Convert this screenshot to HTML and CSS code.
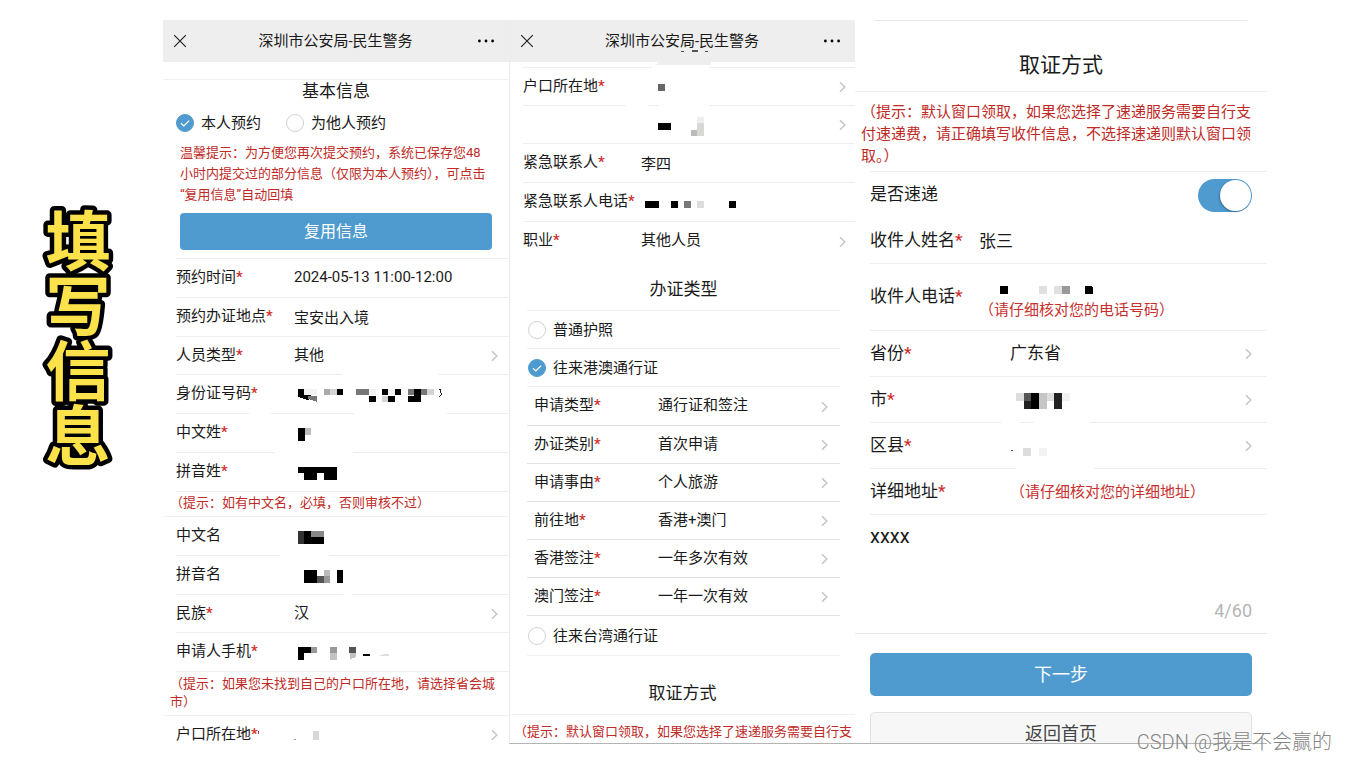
FILE: index.html
```html
<!DOCTYPE html>
<html lang="zh-CN">
<head>
<meta charset="utf-8">
<title>填写信息</title>
<link rel="stylesheet" href="styles.css">
</head>
<body>
<svg class="defs" aria-hidden="true">
  <symbol id="chevron" viewBox="0 0 7 12"><path d="M1 1.2 5.8 6 1 10.8" fill="none" stroke="#c4c4c4" stroke-width="1.5"/></symbol>
  <symbol id="close" viewBox="0 0 14 14"><path d="M1.2 1.2 12.8 12.8M12.8 1.2 1.2 12.8" fill="none" stroke="#222" stroke-width="1.2"/></symbol>
  <symbol id="more" viewBox="0 0 18 4"><circle cx="2.4" cy="2" r="1.4"/><circle cx="9" cy="2" r="1.4"/><circle cx="15.6" cy="2" r="1.4"/></symbol>
</svg>
<main class="board">
  <div class="side">
    <h1 class="side-title"><svg class="side-art" viewBox="0 0 120 280"><text x="60" y="8">填写信息</text></svg></h1>
  </div>

  <section class="panel">
    <header class="bar">
      <button class="icon-btn" aria-label="关闭"><svg class="close"><use href="#close"/></svg></button>
      <span class="bar-title">深圳市公安局-民生警务</span>
      <button class="icon-btn" aria-label="更多"><svg class="more"><use href="#more"/></svg></button>
    </header>
    <div class="spacer"></div>
    <h2 class="heading">基本信息</h2>
    <div class="who">
      <label class="option"><input class="radio" type="radio" name="who" checked>本人预约</label>
      <label class="option"><input class="radio" type="radio" name="who">为他人预约</label>
    </div>
    <p class="tip">温馨提示：为方便您再次提交预约，系统已保存您48<br>小时内提交过的部分信息（仅限为本人预约），可点击<br>“复用信息”自动回填</p>
    <button class="btn reuse">复用信息</button>
    <div class="rows first">
      <div class="row"><label class="name" for="time">预约时间<i>*</i></label><input class="value" id="time" value="2024-05-13 11:00-12:00"></div>
      <div class="row"><label class="name" for="place">预约办证地点<i>*</i></label><input class="value" id="place" value="宝安出入境"></div>
      <div class="row pick"><label class="name" for="ptype">人员类型<i>*</i></label><select class="value" id="ptype"><option>其他</option></select><svg class="chev"><use href="#chevron"/></svg></div>
      <div class="row"><span class="name">身份证号码<i>*</i></span>
        <svg class="mosaic" viewBox="0 0 180 38">
          <g fill="#fff"><path d="M48-1h96v1H48zM-45 38h22v1h-22zM60 38h93v1H60z"/></g>
          <path d="M4 14h6v6h7v4l-4 1-9-3zM43 14h6v6h-6zM88 14h6v6h-6zM101 14h6v6h-6zM120 14h7v13h-13v-6h6zM75 21h7v6h-7zM94 21h7v6h-7z"/>
          <path d="M62 14h13v6H62zM114 14h6v6h-6zM127 14h6v6h-6zM14 21h9v6l-9-3z" fill="#777"/>
          <path d="M30 14h6v6h-6z" fill="#aaa"/><path d="M36 14h7v6h-7zM133 14h7v6h-7zM88 21h6v6h-6z" fill="#d3d3d3"/>
          <path d="M75 14h7v6h-7zM94 14h7v6h-7zM10 14h13v6H10z" fill="#f2f2f2"/>
          <path d="M145 14h2l-1 3 2 2-3 3" fill="none" stroke="#222"/>
        </svg></div>
      <div class="row"><span class="name">中文姓<i>*</i></span>
        <svg class="mosaic" viewBox="0 0 180 38"><path d="M-19 38h78v1h-78z" fill="#fff"/><path d="M4 14h7v13H4z"/><path d="M11 14h6v7h-6z" fill="#bbb"/></svg></div>
      <div class="row"><span class="name">拼音姓<i>*</i></span>
        <svg class="mosaic" viewBox="0 0 180 38"><path d="M4 14h39v13H30v-7h-7v7H10v-7H4z"/></svg></div>
    </div>
    <p class="note">（提示：如有中文名，必填，否则审核不过）</p>
    <div class="rows">
      <div class="row"><span class="name">中文名</span>
        <svg class="mosaic" viewBox="0 0 180 38"><path d="M-14 38h49v1h-49z" fill="#fff"/><path d="M4 14h6v13H4z" fill="#333"/><path d="M10 14h7v6h13v7H10z"/><path d="M17 14h13v6H17z" fill="#888"/></svg></div>
      <div class="row"><span class="name">拼音名</span>
        <svg class="mosaic" viewBox="0 0 180 38"><path d="M49 38h9v1h-9z" fill="#fff"/><path d="M10 14h13v13H10zM43 14h6v13h-6z"/><path d="M23 20h7v7h-7z" fill="#555"/><path d="M30 14h6v6h-6z" fill="#bbb"/><path d="M30 20h6v7h-6z" fill="#999"/></svg></div>
      <div class="row pick"><label class="name" for="nation">民族<i>*</i></label><select class="value" id="nation"><option>汉</option></select><svg class="chev"><use href="#chevron"/></svg></div>
      <div class="row"><span class="name">申请人手机<i>*</i></span>
        <svg class="mosaic" viewBox="0 0 180 38"><path d="M4 14h13v6h-7v7H4zM69 21h7v2h-7z"/><path d="M17 14h6v6h-6zM36 14h7v6h-7z" fill="#999"/><path d="M36 20h7v7h-7zM56 20h6v4l-6 2z" fill="#c2c2c2"/><path d="M55 14h7v6h-7z" fill="#555"/><path d="M86 22l6-1h3v2h-9z" fill="#ddd"/></svg></div>
    </div>
    <p class="note wide">（提示：如果您未找到自己的户口所在地，请选择省会城<br>市）</p>
    <div class="rows">
      <div class="row pick"><span class="name">户口所在地<i>*</i></span>
        <svg class="mosaic" viewBox="0 0 180 38"><path d="M19 15h6v9h-6z" fill="#d8d8d8"/><path d="M0 23h2v1H0z" fill="#999"/><path d="M-36 15h1v3h-1z" fill="#c2302e"/></svg>
        <svg class="chev"><use href="#chevron"/></svg></div>
    </div>
  </section>

  <section class="panel second">
    <header class="bar">
      <button class="icon-btn" aria-label="关闭"><svg class="close"><use href="#close"/></svg></button>
      <span class="bar-title">深圳市公安局-民生警务</span>
      <button class="icon-btn" aria-label="更多"><svg class="more"><use href="#more"/></svg></button>
      <svg class="smear" viewBox="0 0 60 18"><path d="M5 11h51v4H0z" fill="#eee"/><path d="M26 1h3v1h-3zM37 0h6v2h-6zM50 1h3v1h-3z" fill="#555"/></svg>
    </header>
    <div class="rows first">
      <div class="row pick"><span class="name">户口所在地<i>*</i></span>
        <svg class="mosaic" viewBox="0 0 180 38"><path d="M11-1h57v1H11zM-15 37H7v1h-22zM18 37h50v1H18z" fill="#fff"/><path d="M17 16h7v7h-7z" fill="#666"/></svg>
        <svg class="chev"><use href="#chevron"/></svg></div>
      <div class="row pick"><span class="name"></span>
        <svg class="mosaic" viewBox="0 0 180 38"><path d="M17 17h13v7H17z"/><path d="M50 24h6v6h-6z" fill="#bbb"/><path d="M56 11h7v6h-7z" fill="#eee"/><path d="M56 17h7v13h-7z" fill="#d6d8d4"/></svg>
        <svg class="chev"><use href="#chevron"/></svg></div>
      <div class="row"><label class="name" for="contact">紧急联系人<i>*</i></label><input class="value" id="contact" value="李四"></div>
      <div class="row"><span class="name">紧急联系人电话<i>*</i></span>
        <svg class="mosaic" viewBox="0 0 180 38"><path d="M4 18h14v7H4zM30 18h7v7h-7zM88 18h7v7h-7z"/><path d="M43 18h7v7h-7z" fill="#777"/><path d="M56 18h7v7h-7z" fill="#ddd"/></svg></div>
      <div class="row pick last"><label class="name" for="job">职业<i>*</i></label><select class="value" id="job"><option>其他人员</option></select><svg class="chev"><use href="#chevron"/></svg></div>
    </div>
    <div class="types">
      <h2 class="heading types-heading">办证类型</h2>
      <label class="option type"><input class="radio" type="radio" name="type">普通护照</label>
      <label class="option type"><input class="radio" type="radio" name="type" checked>往来港澳通行证</label>
      <div class="row pick"><label class="name" for="a1">申请类型<i>*</i></label><select class="value" id="a1"><option>通行证和签注</option></select><svg class="chev"><use href="#chevron"/></svg></div>
      <div class="row pick"><label class="name" for="a2">办证类别<i>*</i></label><select class="value" id="a2"><option>首次申请</option></select><svg class="chev"><use href="#chevron"/></svg></div>
      <div class="row pick"><label class="name" for="a3">申请事由<i>*</i></label><select class="value" id="a3"><option>个人旅游</option></select><svg class="chev"><use href="#chevron"/></svg></div>
      <div class="row pick"><label class="name" for="a4">前往地<i>*</i></label><select class="value" id="a4"><option>香港+澳门</option></select><svg class="chev"><use href="#chevron"/></svg></div>
      <div class="row pick"><label class="name" for="a5">香港签注<i>*</i></label><select class="value" id="a5"><option>一年多次有效</option></select><svg class="chev"><use href="#chevron"/></svg></div>
      <div class="row pick"><label class="name" for="a6">澳门签注<i>*</i></label><select class="value" id="a6"><option>一年一次有效</option></select><svg class="chev"><use href="#chevron"/></svg></div>
      <label class="option type"><input class="radio" type="radio" name="type">往来台湾通行证</label>
    </div>
    <h2 class="heading collect-heading">取证方式</h2>
    <p class="tip collect-tip">（提示：默认窗口领取，如果您选择了速递服务需要自行支</p>
  </section>

  <section class="panel third">
    <h2 class="heading big">取证方式</h2>
    <p class="big-tip">（提示：默认窗口领取，如果您选择了速递服务需要自行支<br>付速递费，请正确填写收件信息，不选择速递则默认窗口领<br>取。）</p>
    <div class="rows first">
      <div class="row express"><label class="name" for="express">是否速递</label><input class="switch" id="express" type="checkbox" role="switch" checked></div>
      <div class="row receiver"><label class="name" for="rname">收件人姓名<i>*</i></label><input class="value" id="rname" value="张三"></div>
      <div class="row receiver phone"><span class="name">收件人电话<i>*</i></span>
        <div class="stack">
          <svg class="mosaic" viewBox="0 0 180 15"><path d="M21 2h8v8h-8zM106 2h6l2 2v6h-8z"/><path d="M60 2h8v8h-8zM75 2h8v8h-8z" fill="#e0e0e0"/><path d="M83 2h8v8h-8z" fill="#999"/></svg>
          <span class="warn">（请仔细核对您的电话号码）</span>
        </div></div>
      <div class="row"><label class="name" for="prov">省份<i>*</i></label><select class="value" id="prov"><option>广东省</option></select><svg class="chev"><use href="#chevron"/></svg></div>
      <div class="row"><span class="name">市<i>*</i></span>
        <svg class="mosaic" viewBox="0 0 180 45"><path d="M-9 45h19v1H-9zM24 45h56v1H24z" fill="#fff"/><path d="M21 16h8v16h-8z"/><path d="M14 16h7v8h-7z" fill="#555"/><path d="M14 24h7v8h-7zM44 16h8v16h-8z" fill="#222"/><path d="M29 16h8v16h-8z" fill="#c5c5c5"/><path d="M6 16h8v8H6zM37 16h7v8h-7z" fill="#ddd"/><path d="M52 16h8v8h-8z" fill="#f2f2f2"/></svg>
        <svg class="chev"><use href="#chevron"/></svg></div>
      <div class="row"><span class="name">区县<i>*</i></span>
        <svg class="mosaic" viewBox="0 0 180 45"><path d="M6 45h78v1H6z" fill="#fff"/><path d="M13 25h8v8h-8z" fill="#ddd"/><path d="M29 25h8v8h-8z" fill="#f2f2f2"/><path d="M1 27h2v1H1z" fill="#555"/></svg>
        <svg class="chev"><use href="#chevron"/></svg></div>
      <div class="row"><label class="name" for="addr">详细地址<i>*</i></label><span class="warn">（请仔细核对您的详细地址）</span></div>
    </div>
    <div class="address">
      <textarea class="area" id="addr">xxxx</textarea>
      <span class="count">4/60</span>
    </div>
    <div class="actions">
      <button class="btn">下一步</button>
      <button class="btn plain">返回首页</button>
    </div>
  </section>
</main>
<div class="watermark">CSDN @我是不会赢的</div>
</body>
</html>
```

FILE: styles.css
```css
* { box-sizing: border-box; }

body {
  margin: 0;
  height: 100vh;
  padding: 20px 0 18px;
  background: #fff;
  color: #1a1a1a;
  font: 15px/22px Roboto, "Noto Sans CJK SC", sans-serif;
}

h1, h2, p { margin: 0; font-weight: 400; }
i { font-style: normal; font-weight: 500; color: #d0302c; }
button, input, select, textarea {
  margin: 0;
  padding: 0;
  border: 0;
  background: none;
  color: inherit;
  font: inherit;
}
.defs { display: none; }

.board {
  display: grid;
  grid-template-columns: 163fr 346fr 346fr 412fr 79fr;
  height: 100%;
  overflow: hidden;
}

/* Vertical title */
.side { padding: 180px 7px 0 0; }
.side-title { display: flex; justify-content: center; }
.side-art {
  width: 120px;
  height: 280px;
  overflow: visible;
  font-family: "Noto Sans CJK SC", sans-serif;
  font-size: 65px;
  font-weight: 700;
  writing-mode: vertical-rl;
  fill: #fbe24a;
  stroke: #000;
  stroke-width: 9px;
  stroke-linejoin: round;
  paint-order: stroke fill;
}

.panel { display: flex; flex-direction: column; min-width: 0; min-height: 0; overflow: hidden; }
.panel > * { flex-shrink: 0; }
.second { border-left: 1px solid #ececec; }
.second, .third { border-bottom: 1px solid #b4b4b4; }

.bar {
  position: relative;
  display: flex;
  align-items: center;
  justify-content: space-between;
  height: 42px;
  padding: 0 14px 0 10px;
  background: #eee;
}
.bar-title { flex: 1; padding-left: 7px; text-align: center; }
.icon-btn { display: flex; }
.close { width: 14px; height: 14px; }
.more { width: 18px; height: 4px; }
.smear { position: absolute; left: 145px; top: 30px; width: 60px; height: 18px; z-index: 1; }

.spacer { height: 18px; border-bottom: 1px solid #f1f1f1; }
.heading { font-size: 17px; text-align: center; }

.who { display: flex; gap: 25px; height: 41px; margin-bottom: -1px; padding-left: 13px; }
.option { display: flex; align-items: center; gap: 7px; }
.radio {
  appearance: none;
  width: 18px;
  height: 18px;
  border: 1px solid #d2d2d2;
  border-radius: 50%;
}
.radio:checked {
  border-color: #4f9bcf;
  background: #4f9bcf url("data:image/svg+xml,%3Csvg xmlns='http://www.w3.org/2000/svg' viewBox='0 0 16 16'%3E%3Cpath d='M4 8.3 6.8 11 12.2 5.6' fill='none' stroke='white' stroke-width='1.2'/%3E%3C/svg%3E") center / 16px no-repeat;
}

.tip, .note { font-size: 13px; color: #bf2a27; }
.tip { padding: 0 17px; line-height: 21px; white-space: nowrap; }
.btn {
  height: 43px;
  border-radius: 5px;
  background: #4f9bcf;
  color: #fff;
  font-size: 18px;
}
.reuse { height: 37px; margin: 8px 17px; border-radius: 4px; font-size: 16px; }

/* Form rows */
.rows { display: flex; flex-direction: column; padding-left: 13px; }
.first::before { content: ""; height: 1px; background: #eee; }
.row {
  display: flex;
  align-items: center;
  height: 39px;
  padding-right: 11px;
  border-bottom: 1px solid #eee;
}
.pick { height: 38px; }
.last { border-bottom: 0; }
.name { flex: 0 0 118px; padding-bottom: 2px; white-space: nowrap; }
.value { flex: 1; min-width: 0; width: 0; height: 24px; padding-bottom: 2px; appearance: none; }
.mosaic { width: 180px; height: 38px; margin-right: auto; overflow: visible; shape-rendering: crispEdges; }
.chev { flex: none; width: 7px; height: 12px; margin-top: 1px; }

.note { padding: 1px 7px 4px; line-height: 19px; border-bottom: 1px solid #f1f1f1; }
.wide { padding: 3px 7px 4px; line-height: 18px; }

/* Second panel */
.second .first { padding-top: 5px; }
.second .row { padding-right: 9px; }
.types { display: flex; flex-direction: column; padding: 0 15px 0 17px; }
.types-heading { height: 51px; padding-top: 18px; border-bottom: 1px solid #f1f1f1; }
.type { height: 38px; padding-left: 1px; border-bottom: 1px solid #f1f1f1; }
.type:last-child { height: 40px; }
.types .row { padding: 0 12px 0 7px; border-color: #e2e2e2; }
.types .type + .row { height: 39px; }
.types .name { flex-basis: 124px; }
.collect-heading { height: 59px; padding-top: 26px; border-bottom: 1px solid #f1f1f1; }
.collect-tip { padding: 6px 0 0 4px; }

/* Third panel */
.third { font-size: 17px; }
.third::before { content: ""; flex: none; height: 1px; margin: 0 20px; background: #e6e6e6; }
.big { height: 71px; padding-top: 33px; border-bottom: 1px solid #f1f1f1; font-size: 21px; }
.big-tip { padding: 9px 6px 4px; color: #bf2a27; font-size: 15px; white-space: nowrap; }
.third .rows { padding-left: 15px; }
.third .row { height: 46px; padding-right: 15px; }
.third .name { flex-basis: 140px; }
.third .express { justify-content: space-between; border-bottom: 0; }
.third .receiver .name { flex-basis: 109px; }
.third .phone { height: 67px; }
.third .mosaic { height: 45px; }
.stack { display: flex; flex-direction: column; padding-top: 11px; }
.third .stack .mosaic { height: 15px; }
.warn { color: #c8302d; font-size: 15px; }
.switch {
  appearance: none;
  display: flex;
  justify-content: flex-end;
  width: 54px;
  height: 33px;
  padding: 1px;
  border-radius: 17px;
  background: #4f9bcf;
}
.switch::before { content: ""; width: 31px; height: 31px; border-radius: 50%; background: #fff; box-shadow: -1px 1px 2px #0004; }
.switch:not(:checked) { justify-content: flex-start; background: #ccc; }

.address { display: flex; flex-direction: column; padding: 10px 15px 11px; border-bottom: 1px solid #e6e6e6; }
.area { height: 75px; resize: none; outline: 0; font-size: 20px; line-height: 22px; }
.count { align-self: flex-end; font-size: 18px; color: #b5b5b5; }
.actions { display: flex; flex-direction: column; gap: 16px; padding: 19px 15px; }
.plain { border: 1px solid #e2e2e2; background: #f7f7f7; color: #444; }

.watermark {
  position: absolute;
  right: 14px;
  bottom: 6px;
  font-size: 20px;
  line-height: 28px;
  font-weight: 300;
  color: #858585;
}
```
